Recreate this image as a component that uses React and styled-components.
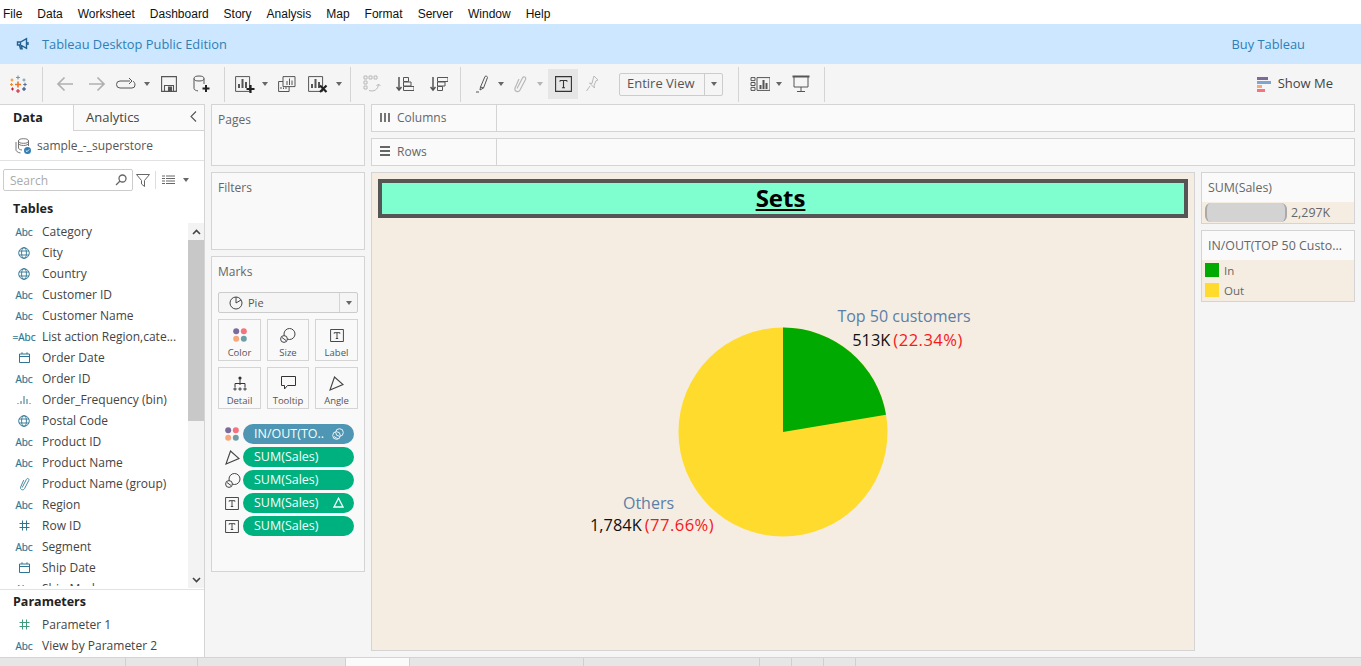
import React from "react";
import styled, { createGlobalStyle } from "styled-components";

const Global = createGlobalStyle`
  html, body { margin: 0; padding: 0; width: 1361px; height: 666px; overflow: hidden; background: #fff; }
  * { box-sizing: border-box; }
  body { font-family: "Open Sans", "Liberation Sans", sans-serif; font-size: 12px; color: #333; }
`;

const Page = styled.div`width:1361px;height:666px;display:flex;flex-direction:column;overflow:hidden;`;
const MenuBar = styled.div`height:24px;flex:none;display:flex;align-items:center;gap:15px;padding:4px 0 0 3px;background:#fff;color:#111;font:12px "Liberation Sans",sans-serif;`;
const Banner = styled.div`height:40px;flex:none;display:flex;align-items:center;background:#cce7ff;color:#2f7fb5;font-size:12.85px;padding:0 56px 0 16px;`;
const BannerText = styled.span`margin-left:12px;flex:1;`;
const Toolbar = styled.div`height:40px;flex:none;display:flex;align-items:center;background:#f5f5f5;`;
const Slot = styled.div`width:${p => p.$w}px;flex:none;height:30px;display:flex;align-items:center;justify-content:center;color:${p => p.$faint ? "#b5b5b5" : "#555"};background:${p => p.$on ? "#e6e6e6" : "transparent"};margin-left:${p => p.$ml || 0}px;`;
const Sep = styled.div`width:1px;height:35px;flex:none;margin:0 6px;background:#d4d4d4;`;
const Caret = styled.i`display:block;width:0;height:0;border-left:3.5px solid transparent;border-right:3.5px solid transparent;border-top:4px solid ${p => p.$faint ? "#b5b5b5" : "#666"};`;
const FitSelect = styled.div`width:104px;height:23px;flex:none;margin:0 9px 0 13px;display:flex;border:1px solid #ccc;border-radius:2px;background:#f5f5f5;color:#555;font-size:13px;align-items:center;`;
const FitText = styled.span`flex:1;padding:0 0 2px 7px;white-space:nowrap;`;
const FitArrow = styled.span`width:18px;height:100%;border-left:1px solid #ccc;display:flex;align-items:center;justify-content:center;`;
const ShowMe = styled.div`margin-left:auto;margin-right:28px;display:flex;align-items:center;gap:7px;color:#444;font-size:13px;`;
const ShowMeLabel = styled.span`padding-bottom:2px;`;

const Main = styled.div`flex:1;min-height:0;display:flex;background:#f5f5f5;`;
const DataPane = styled.aside`width:205px;flex:none;background:#fff;border-right:1px solid #d4d4d4;display:flex;flex-direction:column;`;
const TabRow = styled.div`height:27px;flex:none;display:flex;`;
const DataTab = styled.div`width:73px;padding:0 0 2px 13px;display:flex;align-items:center;font-weight:700;font-size:12.5px;color:#222;border-top:1px solid #d4d4d4;`;
const AnalyticsTab = styled.div`flex:1;display:flex;align-items:center;justify-content:space-between;padding:0 7px 2px 12px;font-size:13px;color:#444;border:1px solid #d4d4d4;border-width:1px 0 1px 1px;background:#fafafa;`;
const SourceRow = styled.div`height:30px;flex:none;display:flex;align-items:center;gap:6px;padding-left:15px;color:#555;font-size:12px;border-bottom:1px solid #e2e2e2;`;
const SearchRow = styled.div`height:22px;flex:none;margin-top:8px;display:flex;align-items:center;padding-left:3px;color:#666;`;
const SearchBox = styled.div`width:130px;height:22px;border:1px solid #ccc;border-radius:2px;display:flex;align-items:center;justify-content:space-between;padding:0 5px 0 6px;color:#aaa;font-size:12px;`;
const SearchDivider = styled.div`width:1px;height:18px;background:#ddd;margin:0 6px 0 3px;`;
const PaneHeading = styled.div`font-weight:700;font-size:12.5px;color:#222;padding-left:13px;line-height:18px;flex:none;margin-top:${p => p.$mt}px;`;
const ListWrap = styled.div`flex:1;min-height:0;margin-top:5px;display:flex;overflow:hidden;`;
const FieldList = styled.div`flex:1;min-width:0;height:365px;overflow:hidden;margin-top:-2px;`;
const Field = styled.div`height:21px;display:flex;align-items:center;color:#444;font-size:12px;white-space:nowrap;`;
const TypeIcon = styled.span`width:42px;flex:none;padding-left:6px;display:flex;align-items:center;justify-content:center;color:${p => p.$green ? "#3f9b7c" : "#2f7592"};font-size:10px;-webkit-text-stroke:0.2px currentColor;`;
const Scrollbar = styled.div`width:16px;flex:none;height:365px;background:#f3f3f3;display:flex;flex-direction:column;`;
const ScrollArrow = styled.div`height:17px;flex:none;display:flex;align-items:center;justify-content:center;color:#444;`;
const ScrollThumb = styled.div`height:181px;background:#c8c8c8;margin-bottom:auto;`;
const ParamBlock = styled.div`height:68px;flex:none;border-top:1px solid #e2e2e2;`;
const ParamRows = styled.div`margin-top:3px;`;

const Cards = styled.div`width:154px;flex:none;margin-left:6px;display:flex;flex-direction:column;gap:6px;`;
const Card = styled.section`height:${p => p.$h}px;flex:none;background:#f9f9f9;border:1px solid #d4d4d4;padding:7px 6px 0;color:#666;font-size:12px;`;
const CardTitle = styled.div`line-height:16px;`;
const MarkSelect = styled.div`height:21px;margin-top:12px;border:1px solid #ccc;border-radius:2px;display:flex;align-items:center;background:#f5f5f5;color:#555;font-size:11px;`;
const MarkSelectBody = styled.div`flex:1;display:flex;align-items:center;gap:5px;padding-left:10px;`;
const MarkArrow = styled.span`width:18px;height:100%;border-left:1px solid #d4d4d4;display:flex;align-items:center;justify-content:center;`;
const MarkGrid = styled.div`display:grid;grid-template-columns:43px 42px 43px;column-gap:6px;row-gap:6px;margin-top:6px;`;
const MarkButton = styled.div`height:42px;border:1px solid #d4d4d4;display:flex;flex-direction:column;align-items:center;justify-content:flex-start;padding-top:5px;font-size:9.5px;line-height:15px;color:#555;background:#f9f9f9;`;
const MarkGlyph = styled.div`height:20px;flex:none;display:flex;align-items:center;justify-content:center;color:#444;`;
const PillList = styled.div`display:flex;flex-direction:column;gap:3px;margin-top:15px;`;
const PillRow = styled.div`display:flex;align-items:center;`;
const PillIcon = styled.div`width:25px;flex:none;padding-left:7px;display:flex;align-items:center;color:#444;`;
const Pill = styled.div`width:111px;height:20px;border-radius:10px;background:${p => p.$blue ? "#4f96b4" : "#00b180"};color:#f4fffb;font-size:12.5px;display:flex;align-items:center;justify-content:space-between;padding:0 10px 1px 11px;white-space:nowrap;`;

const Work = styled.div`flex:1;min-width:0;margin:0 6px;display:flex;flex-direction:column;gap:6px;padding-bottom:6px;`;
const Shelf = styled.div`height:28px;flex:none;display:flex;background:#fafafa;border:1px solid #d4d4d4;`;
const ShelfLabel = styled.div`width:125px;flex:none;border-right:1px solid #d4d4d4;display:flex;align-items:center;gap:7px;padding:0 0 2px 8px;color:#666;font-size:12px;`;
const Stage = styled.div`flex:1;min-height:0;display:flex;gap:6px;`;
const Canvas = styled.div`width:824px;flex:none;position:relative;background:#f5ede2;border:1px solid #d4d4d4;padding:6px;`;
const Title = styled.div`height:39px;border:4px solid #555;background:#7fffd0;display:flex;align-items:center;justify-content:center;color:#000;font-size:24px;font-weight:700;text-decoration:underline;line-height:1;padding:0 5px 2px 0;`;
const PieFrame = styled.svg`position:absolute;left:306px;top:154px;`;
const MarkLabel = styled.div`position:absolute;left:${p => p.$x}px;top:${p => p.$y}px;transform:translateX(-50%);text-align:center;white-space:nowrap;`;
const LabelName = styled.div`color:#5b7fa8;font-size:16px;line-height:${p => p.$lh}px;padding-right:${p => p.$pad || 0}px;`;
const LabelValue = styled.div`color:#111;font-size:16.4px;line-height:22px;padding-left:${p => p.$pad || 0}px;`;
const LabelShare = styled.span`color:#f5191c;margin-left:3px;font-size:16.6px;letter-spacing:0.45px;`;
const Legends = styled.div`flex:1;display:flex;flex-direction:column;gap:6px;`;
const Legend = styled.section`border:1px solid #d4d4d4;background:#f5ede2;flex:none;`;
const LegendHead = styled.div`height:29px;background:#fafafa;padding:7px 0 0 6px;color:#666;font-size:12.4px;line-height:16px;white-space:nowrap;overflow:hidden;`;
const SizeBody = styled.div`height:21px;display:flex;align-items:center;padding-left:3px;color:#666;gap:4px;font-size:12.4px;`;
const SizeBar = styled.div`width:82px;height:19px;background:#d3d3d3;border:solid #aaa;border-width:0 2px;border-radius:6px;`;
const LegendBody = styled.div`padding:0 3px;height:41px;display:flex;flex-direction:column;`;
const LegendRow = styled.div`height:20px;display:flex;align-items:center;gap:5px;color:#666;font-size:11.5px;`;
const Swatch = styled.i`width:14px;height:14px;flex:none;background:${p => p.$c};`;

const TabStrip = styled.div`height:9px;flex:none;display:flex;background:#e6e6e6;border-top:1px solid #d4d4d4;`;
const SheetTab = styled.div`width:${p => p.$w}px;flex:none;border-right:1px solid #d0d0d0;background:${p => p.$on ? "#fafafa" : "transparent"};`;

const S = ({ w = 18, h = 18, sw = 1.2, children, vb }) => (
  <svg width={w} height={h} viewBox={vb || `0 0 ${w} ${h}`} fill="none" stroke="currentColor" strokeWidth={sw}>{children}</svg>
);

const TableauLogo = () => {
  const marks = [[9, 2.5, 4, "#7099a6"], [15, 5, 3, "#7099a6"], [3, 5, 3, "#f28e2b"], [2.5, 9.5, 3, "#f28e2b"], [9, 9.5, 6, "#e8762d"], [16, 9.5, 3.5, "#5b6f99"], [3.5, 14, 3, "#c72035"], [9, 16, 4, "#c72035"], [15, 14, 4, "#1f447e"]];
  return <svg width="18" height="19" viewBox="0 0 18 19">{marks.map(([x, y, s, c], i) => (
    <path key={i} d={`M${x - s / 2} ${y}H${x + s / 2}M${x} ${y - s / 2}V${y + s / 2}`} stroke={c} strokeWidth={x === 9 && y === 9.5 ? 1.6 : 1.1} />
  ))}</svg>;
};
const Megaphone = () => <S w={14} h={14}><path d="M1.5 5h3l6-3.3v9.6l-6-3.300h-3zM4.500 5v3M3.500 8.200l1 3.600h1.600l-.8-3M12 5v3" stroke="#23618f" strokeWidth="1.4" /></S>;
const ArrowL = () => <S w={18} h={16} sw={1.7}><path d="M17 8H2M8.500 1.500 2 8l6.500 6.500" stroke="#b0b0b0" /></S>;
const ArrowR = () => <S w={18} h={16} sw={1.7}><path d="M1 8h15M9.500 1.500 16 8l-6.500 6.500" stroke="#b0b0b0" /></S>;
const Redo = () => <S w={20} h={14} sw={1}><path d="M14 4H4a3 3 0 0 0 0 7h12a3 3 0 0 0 3-3c0-2-1-3-2-4M13 1l3 3-3 3" /></S>;
const Save = () => <S w={16} h={16} sw={1.1}><path d="M.6.6h14.800v14.800H.6zM3.500 15V9.500h9V15" /><path d="M7.500 11h3v4h-3z" fill="currentColor" /></S>;
const Db = () => <S w={18} h={18} sw={1}><ellipse cx="7" cy="3.500" rx="5" ry="2.500" /><path d="M2 3.500v10c0 1.300 2 2.200 4 2.400M12 3.500V9" /><path d="M14 10v7M10.500 13.500h7" stroke="#222" strokeWidth="2" /></S>;
const Bars = () => <path d="M4 13V9M7.500 13V4M11 13V7" strokeWidth="2" />;
const NewSheet = () => <S w={20} h={18} sw={1}><path d="M.6 1.600h14v14.800H.6z" /><Bars /><path d="M15.500 10v8M11.500 14h8" stroke="#222" strokeWidth="2.200" /></S>;
const DupSheet = () => <S w={18} h={16} sw={1}><path d="M5 .6h12v10H5zM5 5.500H.6v10h10.500v-5" /><path d="M9 9V5M11.500 9V2.500M14 9V4.500M3 13v-2M5.500 13v-1.500M8 13v-2" /></S>;
const ClearSheet = () => <S w={20} h={18} sw={1}><path d="M.6 1.600h14v14.800H.6z" /><Bars /><path d="M12 10.500l6.500 6.500M18.500 10.500 12 17" stroke="#222" strokeWidth="2.200" /></S>;
const Swap = () => <S w={18} h={18} sw={1}><g stroke="#b8b8b8"><path d="M1 1h3v3H1zM6 1h3v3H6zM11 1h3v3h-3zM1 6h3v3H1zM1 11h3v3H1zM6 15.500c5 1.500 9-1 9.500-6M13.500 11l2-2 2 2" /></g></S>;
const SortAsc = () => <S w={18} h={16} sw={1}><path d="M3 1v13M.5 11 3 14l2.500-3" strokeWidth="1.500" /><path d="M7.500 1.500h5v4h-5zM7.500 6H15v4H7.500zM7.500 10.500H18v4H7.500z" /></S>;
const SortDesc = () => <S w={18} h={16} sw={1}><path d="M3 1v13M.5 11 3 14l2.500-3" strokeWidth="1.500" /><path d="M7.500 1.500H18v4H7.500zM7.500 6H15v4H7.500zM7.500 10.500h5v4h-5z" /></S>;
const Highlighter = () => <S w={14} h={18} sw={1}><path d="M5.500 12 10 1.500c1-.8 2.500-.2 2.500 1L8.500 13zM5.500 12 5 15l3.500-2M1 17h3" /></S>;
const Clip = ({ c = "#b8b8b8", w = 14, h = 18 }) => <svg width={w} height={h} viewBox="0 0 14 18" fill="none" stroke={c} strokeWidth="1.2"><path d="M4 13.500 9.500 3c1-2 4-1 3 1.500L7 15c-1.500 2.800-6 1.500-5-2l4-9" /></svg>;
const TBox = ({ s = 17 }) => <svg width={s} height={s - 1} viewBox="0 0 17 16" fill="none" stroke="#333" strokeWidth="1.1"><path d="M.6.6h15.800v14.800H.6z" /><path d="M5 4.500h7M8.500 4.500v7.200M7 11.700h3M5 4.500v1.300M12 4.500v1.300" /></svg>;
const Pin = () => <S w={14} h={18} sw={1}><path d="M9 1l4 4-2 .8L9 10.500l.5 2.500-5-5 2.500.5 1.200-4.800zM5 11l-3.500 5" stroke="#b8b8b8" /></S>;
const ShowMeSheet = () => <S w={20} h={14} sw={1}><path d="M1 .6h4v3H1zM1 5.500h4v3H1zM1 10.400h4v3H1zM7 .6h13v12.800H7z" /><path d="M10.500 12V8M13.500 12V3M16.500 12V6" strokeWidth="2" /></S>;
const Present = () => <S w={18} h={18} sw={1}><path d="M.5 1.500h17" strokeWidth="2" /><path d="M2 2v10h14V2M9 12v4M5 16.500h8" /></S>;
const ShowMeGlyph = () => <svg width="14" height="15" viewBox="0 0 14 15"><path d="M0 0h11v3H0z" fill="#7b6a9c" /><path d="M0 4h14v3H0z" fill="#7ca6d0" /><path d="M0 8h5v3H0z" fill="#f6a77b" /><path d="M0 12h8v3H0z" fill="#f4737f" /></svg>;
const Source = () => <svg width="16" height="16" viewBox="0 0 16 16" fill="none" stroke="#666" strokeWidth=".9"><ellipse cx="8.500" cy="3" rx="5" ry="2.300" /><path d="M3.500 3v7c0 1 1.500 1.800 3.500 2M13.500 3v5M3.500 5.500c0 1 2.200 2 5 2s5-1 5-2M1 4v8c0 1 1.500 2.500 4.500 3" /><circle cx="12.500" cy="12.500" r="3.500" fill="#2f7fb5" stroke="none" /><path d="M10.800 12.500l1.200 1.200 2-2.200" stroke="#fff" /></svg>;
const Magnifier = () => <S w={12} h={12} sw={1.3}><circle cx="7.500" cy="4.500" r="3.500" stroke="#666" /><path d="M5 7 1 11" stroke="#666" /></S>;
const Funnel = () => <S w={14} h={13} sw={1}><path d="M.5.5h13L8.500 6.500v6l-3-2.500V6.500z" stroke="#666" /></S>;
const Lines = () => <S w={13} h={10} sw={1}><path d="M0 1h3M0 3.500h3M0 6h3M0 8.500h3M4 1h9M4 3.500h9M4 6h9M4 8.500h9" stroke="#666" /></S>;
const Globe = () => <S w={12} h={12} sw={.9}><circle cx="6" cy="6" r="5.300" /><ellipse cx="6" cy="6" rx="2.400" ry="5.300" /><path d="M1 4h10M1 8h10" /></S>;
const Cal = () => <S w={11} h={11} sw={1}><path d="M.5 2h10v8.500H.5zM.5 4.500h10M3 .3V2M8 .3V2" /></S>;
const Hash = () => <S w={11} h={11} sw={1}><path d="M3.500.5v10M7.500.5v10M.5 3.500h10M.5 7.500h10" /></S>;
const MiniBars = () => <S w={14} h={10} sw={1}><path d="M1 9V8M4 9V6M7 9V1M10 9V4M13 9V8" /></S>;
const Dots = () => <svg width="14" height="14" viewBox="0 0 14 14"><circle cx="3.200" cy="3.200" r="3" fill="#7b6a9c" /><circle cx="10.800" cy="3.200" r="3" fill="#f4737f" /><circle cx="3.200" cy="10.800" r="3" fill="#f6a77b" /><circle cx="10.800" cy="10.800" r="3" fill="#6f9ea8" /></svg>;
const SizeGlyph = () => <S w={16} h={15} sw={1}><circle cx="9.500" cy="6" r="5.500" stroke="#444" fill="#f9f9f9" /><circle cx="4" cy="11" r="3.400" stroke="#444" fill="#f9f9f9" /><path d="M2 9.500l4 3" stroke="#444" /></S>;
const TreeGlyph = () => <S w={14} h={15} sw={1}><circle cx="7" cy="2" r="1.600" fill="#333" stroke="none" /><path d="M7 3v6M2 11V7.500h10V11" stroke="#333" /><circle cx="2" cy="13" r="1.100" stroke="#333" /><circle cx="7" cy="13" r="1.100" stroke="#333" /><circle cx="12" cy="13" r="1.100" stroke="#333" /></S>;
const Bubble = () => <S w={15} h={14} sw={1}><path d="M.5.5h14v9H6.500l-3 3.500V9.500H.5z" stroke="#333" /></S>;
const AngleGlyph = () => <S w={15} h={15} sw={1.1}><path d="M1 14 5.500 1 14 8.500z" stroke="#444" /></S>;
const PieGlyph = () => <S w={14} h={14} sw={1}><circle cx="7" cy="7" r="6" stroke="#444" /><path d="M7 7V1M7 7l5-3" stroke="#444" /></S>;
const Link = () => <S w={12} h={12} sw={1}><circle cx="7.500" cy="4.500" r="3.800" stroke="#e7f4f8" /><circle cx="4.500" cy="7.500" r="3.800" stroke="#e7f4f8" /><path d="M2 8.500 6 11" stroke="#e7f4f8" /></S>;
const Delta = () => <svg width="11" height="11" viewBox="0 0 11 11" fill="none" stroke="#f4fffb" strokeWidth="1.300"><path d="M5.500 1.200 1 10h9z" /></svg>;
const Columns3 = () => <S w={10} h={10} sw={1.800}><path d="M1 1v9M5 1v9M9 1v9" stroke="#666" /></S>;
const Rows3 = () => <S w={10} h={10} sw={1.800}><path d="M0 1h10M0 5h10M0 9h10" stroke="#666" /></S>;

const tools = [
  [36, <TableauLogo />], "sep",
  [32, <ArrowL />], [32, <ArrowR />], [26, <Redo />], [16, <Caret />], [28, <Save />], [35, <Db />], "sep",
  [28, <NewSheet />], [12, <Caret />], [32, <DupSheet />], [30, <ClearSheet />], [11, <Caret />], "sep",
  [30, <Swap />], [36, <SortAsc />], [31, <SortDesc />], "sep",
  [30, <Highlighter />], [8, <Caret />], [30, <Clip />], [10, <Caret $faint />],
];
const fields = [
  ["abc", "Category"], ["globe", "City"], ["globe", "Country"], ["abc", "Customer ID"], ["abc", "Customer Name"],
  ["eq", "List action Region,cate..."], ["cal", "Order Date"], ["abc", "Order ID"], ["bars", "Order_Frequency (bin)"],
  ["globe", "Postal Code"], ["abc", "Product ID"], ["abc", "Product Name"], ["clip", "Product Name (group)"],
  ["abc", "Region"], ["hash", "Row ID"], ["abc", "Segment"], ["cal", "Ship Date"], ["abc", "Ship Mode"],
];
const typeGlyph = k => ({
  abc: "Abc", eq: "=Abc", globe: <Globe />, cal: <Cal />, hash: <Hash />, bars: <MiniBars />, clip: <Clip c="#3d7f96" w={11} h={14} />,
}[k]);
const marks = [["Color", <Dots />], ["Size", <SizeGlyph />], ["Label", <TBox s={14} />], ["Detail", <TreeGlyph />], ["Tooltip", <Bubble />], ["Angle", <AngleGlyph />]];
const pills = [
  [<Dots />, "IN/OUT(TO..", <Link />, true], [<AngleGlyph />, "SUM(Sales)"], [<SizeGlyph />, "SUM(Sales)"],
  [<TBox s={14} />, "SUM(Sales)", <Delta />], [<TBox s={14} />, "SUM(Sales)"],
];
const menus = ["File", "Data", "Worksheet", "Dashboard", "Story", "Analysis", "Map", "Format", "Server", "Window", "Help"];
const sheets = [[126], [72], [148], [64, true], [174], [176], [32], [32], [32]];

export default function App() {
  return (
    <Page>
      <Global />
      <MenuBar>{menus.map(m => <span key={m}>{m}</span>)}</MenuBar>
      <Banner><Megaphone /><BannerText>Tableau Desktop Public Edition</BannerText><span>Buy Tableau</span></Banner>
      <Toolbar>
        {tools.map((t, i) => t === "sep" ? <Sep key={i} /> : <Slot key={i} $w={t[0]}>{t[1]}</Slot>)}
        <Slot $w={30} $ml={3} $on><TBox /></Slot>
        <Slot $w={28}><Pin /></Slot>
        <FitSelect><FitText>Entire View</FitText><FitArrow><Caret /></FitArrow></FitSelect>
        <Sep />
        <Slot $w={30}><ShowMeSheet /></Slot>
        <Slot $w={8}><Caret /></Slot>
        <Slot $w={35}><Present /></Slot>
        <Sep />
        <ShowMe><ShowMeGlyph /><ShowMeLabel>Show Me</ShowMeLabel></ShowMe>
      </Toolbar>
      <Main>
        <DataPane>
          <TabRow>
            <DataTab>Data</DataTab>
            <AnalyticsTab><span>Analytics</span><S w={7} h={11} sw={1.100}><path d="M6 .5 1 5.500l5 5" stroke="#555" /></S></AnalyticsTab>
          </TabRow>
          <SourceRow><Source /><span>sample_-_superstore</span></SourceRow>
          <SearchRow>
            <SearchBox><span>Search</span><Magnifier /></SearchBox>
            <Slot $w={19}><Funnel /></Slot>
            <SearchDivider />
            <Lines />
            <Slot $w={22}><Caret /></Slot>
          </SearchRow>
          <PaneHeading $mt={9}>Tables</PaneHeading>
          <ListWrap>
            <FieldList>{fields.map(([k, n]) => <Field key={n}><TypeIcon>{typeGlyph(k)}</TypeIcon>{n}</Field>)}</FieldList>
            <Scrollbar>
              <ScrollArrow><S w={9} h={6} sw={1.600}><path d="M1 5l3.500-3.500L8 5" stroke="#444" /></S></ScrollArrow>
              <ScrollThumb />
              <ScrollArrow><S w={9} h={6} sw={1.600}><path d="M1 1l3.500 3.500L8 1" stroke="#444" /></S></ScrollArrow>
            </Scrollbar>
          </ListWrap>
          <ParamBlock>
            <PaneHeading $mt={3}>Parameters</PaneHeading>
            <ParamRows>
              <Field><TypeIcon $green><Hash /></TypeIcon>Parameter 1</Field>
              <Field><TypeIcon>Abc</TypeIcon>View by Parameter 2</Field>
            </ParamRows>
          </ParamBlock>
        </DataPane>
        <Cards>
          <Card $h={62}><CardTitle>Pages</CardTitle></Card>
          <Card $h={78}><CardTitle>Filters</CardTitle></Card>
          <Card $h={316}>
            <CardTitle>Marks</CardTitle>
            <MarkSelect><MarkSelectBody><PieGlyph />Pie</MarkSelectBody><MarkArrow><Caret /></MarkArrow></MarkSelect>
            <MarkGrid>{marks.map(([n, g]) => <MarkButton key={n}><MarkGlyph>{g}</MarkGlyph>{n}</MarkButton>)}</MarkGrid>
            <PillList>{pills.map(([g, t, e, b], i) => <PillRow key={i}><PillIcon>{g}</PillIcon><Pill $blue={b}><span>{t}</span>{e}</Pill></PillRow>)}</PillList>
          </Card>
        </Cards>
        <Work>
          <Shelf><ShelfLabel><Columns3 />Columns</ShelfLabel></Shelf>
          <Shelf><ShelfLabel><Rows3 />Rows</ShelfLabel></Shelf>
          <Stage>
            <Canvas>
              <Title>Sets</Title>
              <PieFrame width="210" height="210" viewBox="0 0 210 210">
                <circle cx="105" cy="105" r="104.500" fill="#ffdb2e" />
                <path d="M105 105V.5A104.500 104.500 0 0 1 208 87.700Z" fill="#00aa00" />
              </PieFrame>
              <MarkLabel $x={532} $y={130}>
                <LabelName $lh={26}>Top 50 customers</LabelName>
                <LabelValue $pad={7}>513K<LabelShare>(22.34%)</LabelShare></LabelValue>
              </MarkLabel>
              <MarkLabel $x={280} $y={319}>
                <LabelName $lh={22} $pad={7}>Others</LabelName>
                <LabelValue>1,784K<LabelShare>(77.66%)</LabelShare></LabelValue>
              </MarkLabel>
            </Canvas>
            <Legends>
              <Legend>
                <LegendHead>SUM(Sales)</LegendHead>
                <SizeBody><SizeBar />2,297K</SizeBody>
              </Legend>
              <Legend>
                <LegendHead>IN/OUT(TOP 50 Custo...</LegendHead>
                <LegendBody>
                  <LegendRow><Swatch $c="#00aa00" />In</LegendRow>
                  <LegendRow><Swatch $c="#ffdb2e" />Out</LegendRow>
                </LegendBody>
              </Legend>
            </Legends>
          </Stage>
        </Work>
      </Main>
      <TabStrip>{sheets.map(([w, on], i) => <SheetTab key={i} $w={w} $on={on} />)}</TabStrip>
    </Page>
  );
}
